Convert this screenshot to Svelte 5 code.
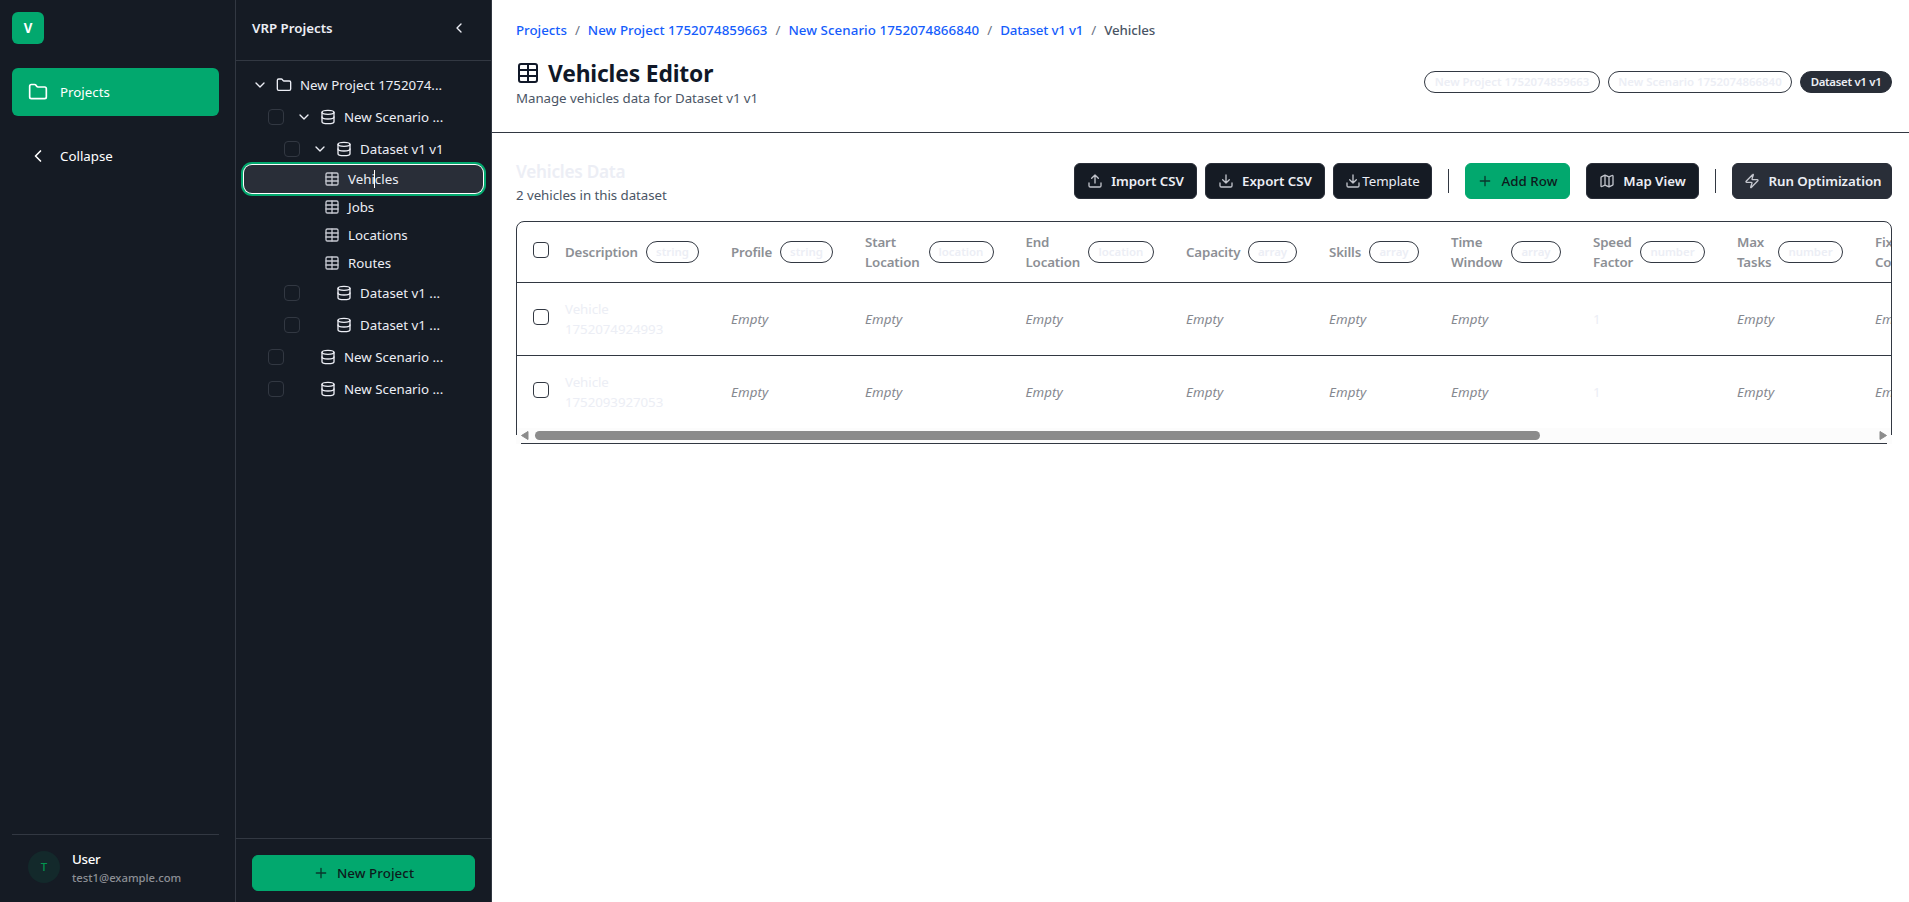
<script>
  const tree = [
    { label: 'New Project 1752074...', icon: 'folder', pad: 8, open: true },
    { label: 'New Scenario ...', icon: 'db', pad: 24, check: true, open: true },
    { label: 'Dataset v1 v1', icon: 'db', pad: 40, check: true, open: true },
    { label: 'Vehicles', icon: 'table', leaf: true, active: true },
    { label: 'Jobs', icon: 'table', leaf: true },
    { label: 'Locations', icon: 'table', leaf: true },
    { label: 'Routes', icon: 'table', leaf: true },
    { label: 'Dataset v1 ...', icon: 'db', pad: 40, check: true },
    { label: 'Dataset v1 ...', icon: 'db', pad: 40, check: true },
    { label: 'New Scenario ...', icon: 'db', pad: 24, check: true },
    { label: 'New Scenario ...', icon: 'db', pad: 24, check: true }
  ];
  const crumbs = [
    { label: 'Projects', track: 0 },
    { label: 'New Project 1752074859663', track: 0.04 },
    { label: 'New Scenario 1752074866840', track: 0.07 },
    { label: 'Dataset v1 v1', track: -0.18 }
  ];
  const columns = [
    { lines: ['Description'], type: 'string', badge: 53 },
    { lines: ['Profile'], type: 'string', badge: 53 },
    { lines: ['Start', 'Location'], type: 'location', badge: 65 },
    { lines: ['End', 'Location'], type: 'location', badge: 66 },
    { lines: ['Capacity'], type: 'array', badge: 49 },
    { lines: ['Skills'], type: 'array', badge: 50 },
    { lines: ['Time', 'Window'], type: 'array', badge: 50 },
    { lines: ['Speed', 'Factor'], type: 'number', badge: 65 },
    { lines: ['Max', 'Tasks'], type: 'number', badge: 65 },
    { lines: ['Fixed', 'Cost'] }
  ];
  const rows = ['1752074924993', '1752093927053'];
</script>

{#snippet icon(name, size = 16, sw = 2)}
  <svg width={size} height={size} viewBox="0 0 24 24" fill="none" stroke="currentColor" stroke-width={sw} stroke-linecap="round" stroke-linejoin="round">
    {#if name === 'folder'}
      <path d="M20 20a2 2 0 0 0 2-2V8a2 2 0 0 0-2-2h-7.9a2 2 0 0 1-1.69-.9L9.6 3.9A2 2 0 0 0 7.93 3H4a2 2 0 0 0-2 2v13a2 2 0 0 0 2 2Z" />
    {:else if name === 'db'}
      <ellipse cx="12" cy="5" rx="9" ry="3" /><path d="M3 5v14a9 3 0 0 0 18 0V5" /><path d="M3 12a9 3 0 0 0 18 0" />
    {:else if name === 'table'}
      <rect x="3" y="3" width="18" height="18" rx="2" /><path d="M3 9h18M3 15h18M12 3v18" />
    {:else if name === 'down'}
      <path d="m6 9 6 6 6-6" />
    {:else if name === 'left'}
      <path d="m15 18-6-6 6-6" />
    {:else if name === 'plus'}
      <path d="M5 12h14M12 5v14" />
    {:else if name === 'upload'}
      <path d="M21 15v4a2 2 0 0 1-2 2H5a2 2 0 0 1-2-2v-4M17 8l-5-5-5 5M12 3v12" />
    {:else if name === 'download'}
      <path d="M21 15v4a2 2 0 0 1-2 2H5a2 2 0 0 1-2-2v-4M7 10l5 5 5-5M12 15V3" />
    {:else if name === 'map'}
      <path d="M14.1 5.55a2 2 0 0 0 1.8 0l3.65-1.83A1 1 0 0 1 21 4.62v12.76a1 1 0 0 1-.55.9l-4.55 2.27a2 2 0 0 1-1.8 0l-4.2-2.1a2 2 0 0 0-1.8 0l-3.65 1.83A1 1 0 0 1 3 19.38V6.62a1 1 0 0 1 .55-.9L8.1 3.45a2 2 0 0 1 1.8 0zM15 5.76v15M9 3.24v15" />
    {:else if name === 'zap'}
      <path d="M4 14a1 1 0 0 1-.78-1.63l9.9-10.2a.5.5 0 0 1 .86.46l-1.92 6.02A1 1 0 0 0 13 10h7a1 1 0 0 1 .78 1.63l-9.9 10.2a.5.5 0 0 1-.86-.46l1.92-6.02A1 1 0 0 0 11 14z" />
    {/if}
  </svg>
{/snippet}

<div class="page">
  <aside class="nav">
    <div class="logo">V</div>
    <div class="nav-item current">{@render icon('folder', 20)}<span>Projects</span></div>
    <div class="nav-item">{@render icon('left', 20)}<span>Collapse</span></div>
    <div class="user">
      <div class="avatar">T</div>
      <div class="who"><b>User</b><span>test1@example.com</span></div>
    </div>
  </aside>

  <aside class="projects">
    <header><span>VRP Projects</span>{@render icon('left', 16)}</header>
    <div class="tree">
      {#each tree as n}
        {#if n.leaf}
          <div class="leaf" class:active={n.active}>
            {@render icon(n.icon)}<span>{n.label}</span>
            {#if n.active}<i class="caret"></i>{/if}
          </div>
        {:else}
          <div class="node" style:padding-left="{n.pad}px">
            {#if n.check}<i class="check dim"></i>{/if}
            <i class="chev">{#if n.open}{@render icon('down', 16)}{/if}</i>
            {@render icon(n.icon)}<span>{n.label}</span>
          </div>
        {/if}
      {/each}
    </div>
    <footer><button class="green">{@render icon('plus')}<span>New Project</span></button></footer>
  </aside>

  <main>
    <section class="top">
      <nav class="crumbs">
        {#each crumbs as c}<a href="#top" style:letter-spacing="{c.track}px">{c.label}</a><span class="slash">/</span>{/each}<span class="here">Vehicles</span>
      </nav>
      <div class="title-row">
        <div>
          <h1>{@render icon('table', 24)}<span>Vehicles Editor</span></h1>
          <p class="sub">Manage vehicles data for Dataset v1 v1</p>
        </div>
        <div class="pills">
          <span class="pill" style:width="176px">New Project 1752074859663</span>
          <span class="pill" style:width="184px">New Scenario 1752074866840</span>
          <span class="pill solid" style:width="92px">Dataset v1 v1</span>
        </div>
      </div>
    </section>

    <section class="data">
      <div class="bar">
        <div class="heading">
          <h2>Vehicles Data</h2>
          <p class="sub">2 vehicles in this dataset</p>
        </div>
        <div class="tools">
          <button style:width="123px">{@render icon('upload')}<span>Import CSV</span></button>
          <button style:width="120px">{@render icon('download')}<span>Export CSV</span></button>
          <button class="plain" style:width="99px">{@render icon('download')}<span>Template</span></button>
          <i class="sep"></i>
          <button class="green" style:width="105px">{@render icon('plus')}<span>Add Row</span></button>
          <button class="map" style:width="113px">{@render icon('map')}<span>Map View</span></button>
          <i class="sep"></i>
          <button class="run" style:width="160px">{@render icon('zap')}<span>Run Optimization</span></button>
        </div>
      </div>

      <div class="frame">
        <div class="table">
          <div class="tr head">
            <div class="sel"><i class="check"></i></div>
            {#each columns as c}
              <div class="cell th">
                <span class="name">{#each c.lines as l}<span>{l}</span>{/each}</span>
                {#if c.type}<span class="pill" style:width="{c.badge}px">{c.type}</span>{/if}
              </div>
            {/each}
          </div>
          {#each rows as id}
            <div class="tr">
              <div class="sel"><i class="check"></i></div>
              {#each columns as c, i}
                <div class="cell">
                  {#if i === 0}<span class="pale">Vehicle<br />{id}</span>
                  {:else if i === 7}<span class="pale">1</span>
                  {:else}<em>Empty</em>{/if}
                </div>
              {/each}
            </div>
          {/each}
          <div class="scroll">
            <svg width="8" height="9" viewBox="0 0 8 9"><path d="M7 .5v8L.5 4.5z" fill="#8b8b8b" stroke="#8b8b8b" stroke-linejoin="round" /></svg>
            <div class="track"><i class="thumb"></i></div>
            <svg width="8" height="9" viewBox="0 0 8 9"><path d="M1 .5v8l6.500-4z" fill="#8b8b8b" stroke="#8b8b8b" stroke-linejoin="round" /></svg>
          </div>
        </div>
      </div>
    </section>
  </main>
</div>

<style>
  :global(body) { background: #fff; }
  * { box-sizing: border-box; }
  .page {
    display: flex; width: 100%; height: 902px; overflow: hidden;
    font: 13.3px/20px "Noto Sans", sans-serif; color: #eceef5;
  }
  svg { flex: none; display: block; }
  span { white-space: nowrap; }
  i { display: block; }
  h1, h2, p { margin: 0; }

  .nav {
    width: 236px; flex: none; background: #151b24; border-right: 1px solid #323842;
    padding: 12px 16px 0 12px; display: flex; flex-direction: column;
  }
  .logo {
    width: 32px; height: 32px; border-radius: 6px; background: #02a86e; color: #fff;
    font-weight: 700; display: grid; place-items: center; margin-bottom: 24px;
  }
  .nav-item {
    height: 48px; border-radius: 6px; padding-left: 16px; display: flex; align-items: center;
    gap: 12px; color: #fff; margin-bottom: 16px;
  }
  .nav-item.current { background: #02a86e; }
  .user { margin-top: auto; height: 68px; border-top: 1px solid #323842; padding: 16px 0 0 16px; display: flex; gap: 12px; }
  .avatar {
    width: 32px; height: 32px; border-radius: 50%; background: #13292b; color: #02954f;
    font-size: 11.400px; font-weight: 500; display: grid; place-items: center;
  }
  .who { display: flex; flex-direction: column; }
  .who b { font-weight: 500; color: #fff; line-height: 17px; letter-spacing: -0.3px; }
  .who span { font-size: 11.300px; font-weight: 500; line-height: 20px; letter-spacing: -0.02px; color: #8c8f95; }

  .projects { width: 256px; flex: none; background: #151b24; border-right: 1px solid #323842; display: flex; flex-direction: column; }
  .projects header {
    height: 61px; border-bottom: 1px solid #323842; padding: 0 24px 4px 16px;
    display: flex; align-items: center; justify-content: space-between; font-weight: 600;
  }
  .tree { flex: 1; padding: 8px; }
  .node { height: 32px; display: flex; align-items: center; }
  .chev { width: 16px; height: 16px; margin-right: 8px; }
  .node span, .leaf span { margin-left: 8px; }
  .leaf { height: 28px; padding-left: 80px; display: flex; align-items: center; border-radius: 6px; position: relative; }
  .leaf svg { color: #c3c6ce; }
  .leaf.active { background: #292e38; box-shadow: 0 0 0 1px #fff, 0 0 0 3px #02a86e; border-radius: 8px; }
  .caret { position: absolute; left: 130px; top: 5px; width: 1px; height: 18px; background: #fff; }
  .check { width: 16px; height: 16px; border: 1px solid #323842; border-radius: 4px; }
  .check.dim { margin-right: 12px; }
  .projects footer { height: 64px; border-top: 1px solid #323842; padding: 16px 16px 0; display: flex; }
  .projects footer button { width: 223px; }

  button {
    height: 36px; border: 1px solid #292e38; border-radius: 6px; background: #151b24; color: #eceef5;
    font: 600 13.3px/20px "Noto Sans", sans-serif; letter-spacing: -0.03px;
    display: flex; align-items: center; justify-content: center; gap: 8px; padding: 0;
  }
  button svg { opacity: 0.8; }
  button.green { background: #02a86e; border-color: #02a86e; color: #0d1a1c; font-weight: 500; letter-spacing: 0.08px; }
  button.plain { font-weight: 400; gap: 1px; }
  button.run { background: #292e38; padding-left: 2px; }

  main { flex: 1; min-width: 0; color: #4a5565; }
  .top { height: 133px; border-bottom: 1px solid #323842; padding: 20px 17px 0 24px; }
  .crumbs { display: flex; gap: 8px; font-weight: 500; }
  .crumbs a { color: #155dfc; text-decoration: none; }
  .slash { color: #6a7282; font-weight: 400; }
  .here { letter-spacing: -0.1px; }
  .title-row { display: flex; justify-content: space-between; margin-top: 17px; }
  .sub { letter-spacing: -0.05px; }
  h1 { display: flex; align-items: center; gap: 8px; color: #101828; font-size: 22.800px; line-height: 31px; font-weight: 700; letter-spacing: -0.15px; }
  h1 span { padding-top: 1px; margin-bottom: -1px; }
  .pills { display: flex; gap: 8px; padding-top: 14px; }
  .pill {
    height: 22px; border: 1px solid #323842; border-radius: 11px; color: #eceef5; flex: none;
    font-size: 11.400px; font-weight: 600; line-height: 20px; text-align: center;
  }
  .pill.solid { background: #292e38; border-color: #292e38; letter-spacing: -0.3px; }

  .data { padding: 30px 17px 0 24px; }
  .bar { display: flex; justify-content: space-between; height: 58px; }
  h2 { color: #eceef5; font-size: 17.200px; line-height: 18px; font-weight: 600; letter-spacing: -0.25px; }
  .heading .sub { margin-top: 4px; }
  .tools { display: flex; align-items: center; gap: 8px; height: 36px; }
  .sep { width: 1px; height: 24px; background: #323842; margin: 0 8px; }
  .map { margin-left: 8px; }

  .frame { position: relative; }
  .frame::before, .frame::after {
    content: ""; position: absolute; bottom: 0; width: 5px; height: 9px;
    background: linear-gradient(#fcfcfc, #fcfcfc) no-repeat;
  }
  .frame::before { left: 0; }
  .frame::after { right: 0; }
  .table { border: 1px solid #323842; border-radius: 8px 8px 0 0; overflow: hidden; height: 223px; }
  .tr {
    display: grid; height: 73px; border-bottom: 1px solid #323842; width: 1500px; align-items: center;
    grid-template-columns: 32px 166px 134px 160.500px 160.500px 143px 122px 142px 144px 138px 158px;
  }
  .tr.head { height: 61px; }
  .tr:nth-child(3) { border-bottom: 0; height: 72px; }
  .sel { padding: 0 0 4px 16px; }
  .cell { padding: 0 16px; }
  .th { display: flex; align-items: center; justify-content: space-between; font-weight: 600; color: #8c8f95; letter-spacing: -0.15px; }
  .th .pill { letter-spacing: 0; }
  .name { display: flex; flex-direction: column; }
  .pale { color: #eceef5; letter-spacing: -0.05px; }
  em { color: #85888f; letter-spacing: 0.1px; }
  .scroll { height: 15px; background: #fcfcfc; display: flex; align-items: center; padding: 0 4px; justify-content: space-between; }
  .track { flex: 1; padding: 0 6px; }
  .thumb { width: 1005px; height: 9px; border-radius: 5px; background: #8b8b8b; }
</style>
